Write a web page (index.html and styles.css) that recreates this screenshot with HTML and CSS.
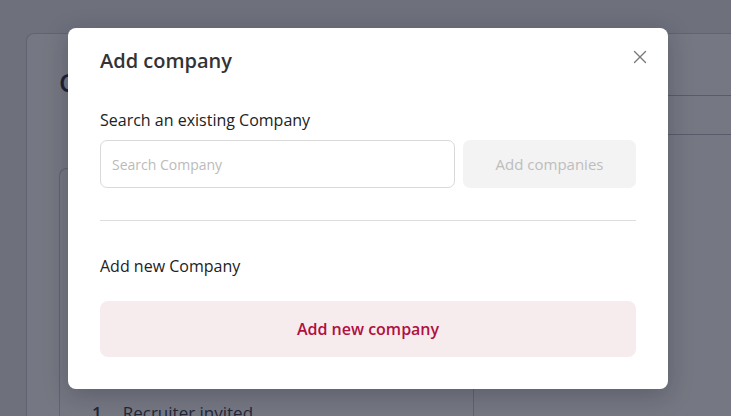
FILE: index.html
```html
<!DOCTYPE html>
<html lang="en">
<head>
<meta charset="utf-8">
<title>Add company</title>
<link rel="stylesheet" href="styles.css">
</head>
<body>
<div class="page">
  <div class="card">
    <div class="left">
      <h1 class="page-title">Companies</h1>
      <div class="inner-card">
        <div class="inner-spacer"></div>
        <div class="step"><span class="step-num">1</span><span class="step-label">Recruiter invited</span></div>
      </div>
    </div>
    <div class="right">
      <div class="right-head"></div>
      <div class="right-row"></div>
    </div>
  </div>
</div>
<div class="overlay"></div>
<div class="modal" role="dialog" aria-labelledby="modal-title">
  <div class="modal-header">
    <h2 id="modal-title" class="modal-title">Add company</h2>
    <button class="close-btn" aria-label="Close">
      <svg width="14" height="14" viewBox="0 0 14 14" fill="none" stroke="#7a7a7a" stroke-width="1.4" stroke-linecap="round"><path d="M1.5 1.5L12.5 12.5M12.5 1.5L1.5 12.5"/></svg>
    </button>
  </div>
  <div class="section">
    <div class="section-label first">Search an existing Company</div>
    <div class="search-row">
      <input class="search-input" type="text" placeholder="Search Company">
      <button class="btn-disabled">Add companies</button>
    </div>
  </div>
  <hr class="divider">
  <div class="section">
    <div class="section-label">Add new Company</div>
    <button class="btn-primary-soft">Add new company</button>
  </div>
</div>
</body>
</html>
```
FILE: styles.css
```css
* { box-sizing: border-box; }
html, body { margin: 0; padding: 0; }
body {
  width: 731px;
  height: 416px;
  overflow: hidden;
  position: relative;
  background: #edeef0;
  font-family: "Open Sans", "Noto Sans", sans-serif;
}
.page {
  padding: 33px 0 0 26px;
}
.card {
  width: 705px;
  height: 383px;
  background: #ffffff;
  border: 1px solid #c9cbd2;
  border-right: none;
  border-bottom: none;
  border-radius: 8px 0 0 0;
  display: flex;
  overflow: hidden;
}
.left {
  width: 446px;
  padding: 30px 0 0 32px;
}
.page-title {
  margin: 0;
  font-size: 26px;
  font-weight: 600;
  color: #1c1f33;
  line-height: 36px;
}
.inner-card {
  margin-top: 68px;
  height: 300px;
  border: 1px solid #c9cbd2;
  border-right: none;
  border-radius: 8px 0 0 0;
  padding: 0 0 0 32px;
}
.inner-spacer { height: 232px; }
.step {
  display: flex;
  gap: 21px;
  font-size: 17px;
  color: #2d3040;
}
.step-num { font-weight: 600; }
.right {
  flex: 1;
  border-left: 1px solid #c9cbd2;
}
.right-head {
  height: 62px;
  border-bottom: 1px solid #b4b7c0;
}
.right-row {
  height: 39px;
  border-bottom: 1px solid #b4b7c0;
}
.overlay {
  position: absolute;
  inset: 0;
  background: rgba(30, 33, 50, 0.61);
}
.modal {
  position: absolute;
  left: 68px;
  top: 28px;
  width: 600px;
  height: 361px;
  background: #ffffff;
  border-radius: 8px;
  box-shadow: 0 6px 24px rgba(20, 22, 40, 0.25);
  padding: 21px 32px 32px 32px;
  display: flex;
  flex-direction: column;
}
.modal-header {
  display: flex;
  justify-content: space-between;
  align-items: flex-start;
  height: 32px;
}
.modal-title {
  margin: 0;
  font-size: 20px;
  font-weight: 600;
  color: #333333;
  line-height: 28px;
  margin-top: -2px;
}
.close-btn {
  border: none;
  background: none;
  padding: 0;
  width: 14px;
  height: 14px;
  margin-top: 1px;
  margin-right: -11px;
  cursor: pointer;
}
.section {
  display: flex;
  flex-direction: column;
}
.section-label {
  font-size: 16px;
  color: #222222;
  line-height: 22px;
  margin-bottom: 9px;
}
.section-label.first { margin-top: 31px; }
.search-row {
  display: flex;
  gap: 8px;
}
.search-input {
  flex: 0 0 355px;
  height: 48px;
  border: 1px solid #d9d9d9;
  border-radius: 7px;
  padding: 0 11px;
  font-family: inherit;
  font-size: 14px;
  color: #333;
  outline: none;
}
.search-input::placeholder { color: #bbbbbb; }
.btn-disabled {
  flex: 1;
  height: 48px;
  border: none;
  border-radius: 7px;
  background: #f3f3f3;
  color: #bdbdbd;
  font-family: inherit;
  font-size: 15px;
}
.divider {
  border: none;
  border-top: 1px solid #dddddd;
  margin: 32px 0 34px 0;
  height: 0;
}
.btn-primary-soft {
  margin-top: 15px;
  height: 56px;
  border: none;
  border-radius: 8px;
  background: #f6ecee;
  color: #b0103f;
  font-family: inherit;
  font-size: 16px;
  font-weight: 600;
}
```
